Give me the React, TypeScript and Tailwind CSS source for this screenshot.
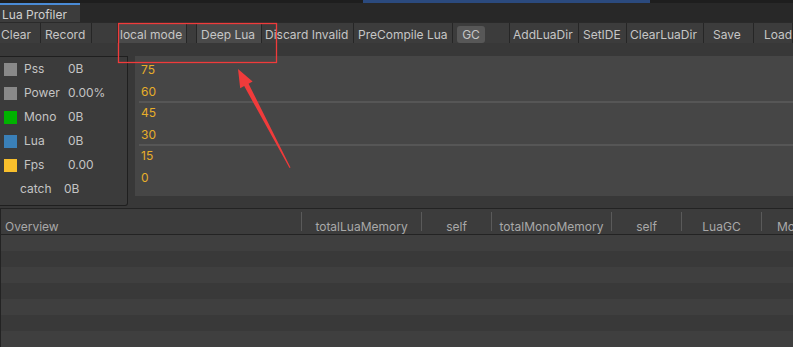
import React from 'react'

type Seg = { label?: string; w?: number; pl?: number; active?: boolean; gc?: boolean }

const segs: Seg[] = [
  { label: 'Clear', w: 41, pl: 1 },
  { label: 'Record', w: 51, pl: 4 },
  { w: 26 },
  { label: 'local mode', w: 69, pl: 2, active: true },
  { w: 10 },
  { label: 'Deep Lua', w: 65, pl: 4, active: true },
  { label: 'Discard Invalid', w: 92, pl: 3 },
  { label: 'PreCompile Lua', w: 99, pl: 4 },
  { w: 57, gc: true },
  { label: 'AddLuaDir', w: 69, pl: 3 },
  { label: 'SetIDE', w: 48, pl: 4 },
  { label: 'ClearLuaDir', w: 77, pl: 3 },
  { label: 'Save', w: 50, pl: 9 },
  { label: 'Load', pl: 10 },
]

const legend = [
  { name: 'Pss', value: '0B', color: 'bg-[#898989]' },
  { name: 'Power', value: '0.00%', color: 'bg-[#898989]' },
  { name: 'Mono', value: '0B', color: 'bg-[#00b300]' },
  { name: 'Lua', value: '0B', color: 'bg-[#3a80b8]' },
  { name: 'Fps', value: '0.00', color: 'bg-[#f8bf2c]' },
]

const columns = [
  { label: 'Overview', w: 300, left: true },
  { label: 'totalLuaMemory', w: 120 },
  { label: 'self', w: 70 },
  { label: 'totalMonoMemory', w: 120 },
  { label: 'self', w: 70 },
  { label: 'LuaGC', w: 80 },
  { label: 'MonoGC', w: 80 },
]

function Toolbar() {
  return (
    <div className="flex h-[21px] bg-[#3c3c3c] border-t border-[#2a2a2a]">
      {segs.map((s, i) => (
        <div
          key={i}
          style={s.w ? { width: s.w } : undefined}
          className={`flex shrink-0 items-center border-r border-[#262626] text-[12px] text-[#c6c6c6] ${
            s.w ? '' : 'flex-1'
          } ${s.active ? 'bg-[#4a4a4a]' : ''}`}
        >
          {s.gc ? (
            <div className="ml-[4px] mt-[2px] flex h-[17px] w-[28px] items-center justify-center rounded-[3px] bg-[#575757] pt-[1px]">
              GC
            </div>
          ) : (
            s.label && (
              <span style={{ paddingLeft: s.pl }} className="whitespace-nowrap pt-[3px]">
                {s.label}
              </span>
            )
          )}
        </div>
      ))}
    </div>
  )
}

function Legend() {
  return (
    <div className="h-[150px] w-[128px] shrink-0 rounded-br-[3px] border border-l-0 border-[#1f1f1f] bg-[#3b3b3b] text-[12px] leading-[24px] text-[#c4c4c4]">
      {legend.map((l) => (
        <div key={l.name} className="flex items-center">
          <div className={`ml-[4px] h-[13px] w-[13px] ${l.color}`} />
          <span className="ml-[7px] w-[44px]">{l.name}</span>
          <span>{l.value}</span>
        </div>
      ))}
      <div className="flex items-center">
        <span className="ml-[20px] w-[44px]">catch</span>
        <span>0B</span>
      </div>
    </div>
  )
}

function Chart() {
  return (
    <div className="relative ml-[7px] h-[140px] flex-1 bg-[#464646]">
      <div className="absolute left-[4px] right-0 top-[45px] h-[2px] bg-[#565656]" />
      <div className="absolute left-[4px] right-0 top-[88px] h-[2px] bg-[#565656]" />
      <div className="relative pl-[6px] pt-[3px] text-[12px] leading-[21.5px] text-[#e6ae2a]">
        {['75', '60', '45', '30', '15', '0'].map((v) => (
          <div key={v}>{v}</div>
        ))}
      </div>
    </div>
  )
}

function Table() {
  return (
    <div className="mt-[2px] flex-1 border-l border-t border-[#232323]">
      <div className="flex h-[26px] items-center border-b border-[#232323] bg-[#3c3c3c] text-[12px] text-[#a9a9a9]">
        {columns.map((c, i) => (
          <div
            key={i}
            style={{ width: c.w }}
            className={`flex h-[19px] shrink-0 items-center whitespace-nowrap ${
              i > 0 ? 'border-l border-[#5a5a5a]' : ''
            } ${c.left ? 'pl-[4px]' : 'justify-center'} ${i === 6 ? 'justify-start pl-[15px]' : ''}`}
          >
            <span className="relative top-[5px]">{c.label}</span>
          </div>
        ))}
      </div>
      {Array.from({ length: 7 }).map((_, i) => (
        <div key={i} className={`h-[16px] ${i % 2 === 0 ? 'bg-[#3f3f3f]' : 'bg-[#393939]'}`} />
      ))}
    </div>
  )
}

export default function App() {
  return (
    <div
      className="relative flex h-[347px] w-[793px] flex-col overflow-hidden bg-[#383838]"
      style={{ fontFamily: 'Inter, "Noto Sans", sans-serif' }}
    >
      <div className="flex h-[4px] bg-[#1e1e1e]">
        <div className="ml-[363px] h-[3px] w-[287px] bg-[#2b4a7e]" />
      </div>
      <div className="flex h-[19px] bg-[#282828]">
        <div className="flex w-[80px] items-center border-t-2 border-[#4a8bd6] bg-[#3c3c3c] pl-[2px] pt-[3px] text-[12px] text-[#d0d0d0]">
          Lua Profiler
        </div>
      </div>
      <Toolbar />
      <div className="mt-[13px] flex items-start">
        <Legend />
        <Chart />
      </div>
      <Table />

      <svg className="pointer-events-none absolute left-0 top-0" width="793" height="347">
        <rect x="118.5" y="23.5" width="158" height="39" fill="none" stroke="#f03b3b" strokeWidth="1.3" />
        <polygon
          points="238,69 252.6,81.6 248.6,83.7 290.5,167.5 289.5,168 244.2,86.1 240.2,88.2"
          fill="#f03b3b"
        />
      </svg>
    </div>
  )
}
